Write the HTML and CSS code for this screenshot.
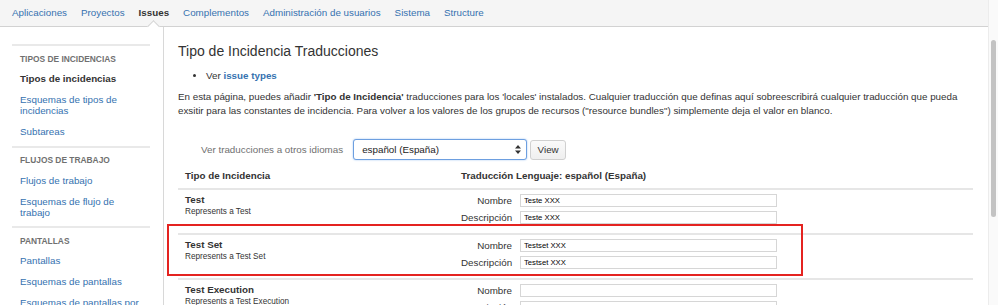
FILE: index.html
```html
<!DOCTYPE html>
<html lang="es">
<head>
  <meta charset="UTF-8" />
  <title>Tipo de Incidencia Traducciones</title>
  <link rel="stylesheet" href="styles.css">
</head>
<body>
  <div class="page">
    <div class="top-nav">
      <a class="nav-item" href="#">Aplicaciones</a>
      <a class="nav-item" href="#">Proyectos</a>
      <a class="nav-item active" href="#">Issues</a>
      <a class="nav-item" href="#">Complementos</a>
      <a class="nav-item" href="#">Administración de usuarios</a>
      <a class="nav-item" href="#">Sistema</a>
      <a class="nav-item" href="#">Structure</a>
    </div>

    <div class="layout">
      <div class="sidebar">
        <div class="side-group">
          <div class="side-heading">Tipos de incidencias</div>
          <a class="side-item current" href="#">Tipos de incidencias</a>
          <a class="side-item" href="#">Esquemas de tipos de incidencias</a>
          <a class="side-item" href="#">Subtareas</a>
        </div>
        <div class="side-group">
          <div class="side-heading">Flujos de trabajo</div>
          <a class="side-item" href="#">Flujos de trabajo</a>
          <a class="side-item" href="#">Esquemas de flujo de trabajo</a>
        </div>
        <div class="side-group">
          <div class="side-heading">Pantallas</div>
          <a class="side-item" href="#">Pantallas</a>
          <a class="side-item" href="#">Esquemas de pantallas</a>
          <a class="side-item" href="#">Esquemas de pantallas por tipo de incidencia</a>
        </div>
      </div>

      <div class="content">
        <h1 class="page-title">Tipo de Incidencia Traducciones</h1>
        <ul class="links">
          <li>Ver <a href="#">issue types</a></li>
        </ul>
        <p class="intro">En esta página, puedes añadir <b>'Tipo de Incidencia'</b> traducciones para los 'locales' instalados. Cualquier traducción que definas aquí sobreescribirá cualquier traducción que pueda exsitir para las constantes de incidencia. Para volver a los valores de los grupos de recursos ("resource bundles") simplemente deja el valor en blanco.</p>

        <div class="locale-row">
          <span class="locale-label">Ver traducciones a otros idiomas</span>
          <div class="select-box">
            <span>español (España)</span>
            <svg width="6" height="9" viewBox="0 0 6 9"><path d="M3 0 L6 3.5 H0 Z M3 9 L6 5.5 H0 Z" fill="#333"/></svg>
          </div>
          <button class="view-button">View</button>
        </div>

        <div class="table-wrap">
          <table class="trans-table">
            <colgroup>
              <col class="col-type">
              <col>
            </colgroup>
            <tr>
              <th>Tipo de Incidencia</th>
              <th>Traducción Lenguaje: español (España)</th>
            </tr>
            <tr>
              <td>
                <div class="issue-name">Test</div>
                <div class="issue-desc">Represents a Test</div>
              </td>
              <td>
                <div class="fields">
                  <label>Nombre</label><input type="text" value="Teste XXX">
                  <label>Descripción</label><input type="text" value="Teste XXX">
                </div>
              </td>
            </tr>
            <tr>
              <td>
                <div class="issue-name">Test Set</div>
                <div class="issue-desc">Represents a Test Set</div>
              </td>
              <td>
                <div class="fields">
                  <label>Nombre</label><input type="text" value="Testset XXX">
                  <label>Descripción</label><input type="text" value="Testset XXX">
                </div>
              </td>
            </tr>
            <tr>
              <td>
                <div class="issue-name">Test Execution</div>
                <div class="issue-desc">Represents a Test Execution</div>
              </td>
              <td>
                <div class="fields">
                  <label>Nombre</label><input type="text" value="">
                  <label>Descripción</label><input type="text" value="">
                </div>
              </td>
            </tr>
          </table>
          <div class="highlight"></div>
        </div>
      </div>
    </div>
  </div>

  <div class="scrollbar">
    <div class="scroll-thumb"></div>
  </div>
</body>
</html>
```

FILE: styles.css
```css
html, body {
  height: 100%;
}

body {
  margin: 0;
  display: flex;
  overflow: hidden;
  font-family: "Liberation Sans", Arial, sans-serif;
  font-size: 9.8px;
  line-height: 14px;
  color: #333;
  background: #fff;
}

a {
  color: #3572b0;
  text-decoration: none;
}

.page {
  flex: 1;
  min-width: 0;
}

/* top navigation */
.top-nav {
  display: flex;
  align-items: center;
  gap: 14px;
  height: 26px;
  padding-left: 12px;
  background-color: #f5f5f5;
  border-bottom: 1px solid #d2d2d2;
}

.nav-item {
  position: relative;
  display: flex;
  align-items: center;
  height: 26px;
}

.nav-item.active {
  color: #333;
  font-weight: bold;
}

.nav-item.active::after {
  content: "";
  position: absolute;
  left: 50%;
  bottom: -4.5px;
  width: 8px;
  height: 8px;
  margin-left: -5px;
  background: #fff;
  border-left: 1px solid #d2d2d2;
  border-top: 1px solid #d2d2d2;
  transform: rotate(45deg);
  z-index: 2;
}

.layout {
  display: flex;
}

/* sidebar */
.sidebar {
  width: 164px;
  box-sizing: border-box;
  padding: 17px 13px 0 12px;
  border-right: 1px solid #d8d8d8;
  min-height: 300px;
}

.side-group {
  border-top: 2px solid #e9e9e9;
  padding-bottom: 3.5px;
}

.side-heading {
  padding: 5.5px 8px 0;
  margin-bottom: 2.5px;
  font-size: 8.4px;
  font-weight: bold;
  text-transform: uppercase;
  color: #707070;
}

.side-item {
  display: block;
  padding: 5px 8px;
  line-height: 11px;
}

.side-item.current {
  color: #333;
  font-weight: bold;
}

/* main content */
.content {
  flex: 1;
  padding: 14px 15px 0 14px;
}

.page-title {
  margin: 0;
  font-size: 14px;
  line-height: 20px;
  font-weight: normal;
  color: #333;
}

.links {
  margin: 8px 0 0;
  padding-left: 28px;
}

.links a {
  font-weight: bold;
}

.intro {
  margin: 7px 0 0;
}

.locale-row {
  display: flex;
  align-items: center;
  margin: 21px 0 0 23px;
  height: 21px;
}

.locale-label {
  color: #707070;
  margin-right: 10px;
}

.select-box {
  display: flex;
  align-items: center;
  justify-content: space-between;
  width: 174px;
  height: 21px;
  box-sizing: border-box;
  padding: 0 5px 0 8px;
  border: 1px solid #6d9fe0;
  border-radius: 3px;
  box-shadow: 0 0 2px #9cc0ef;
  background: #fff;
  color: #222;
}

.view-button {
  margin-left: 3px;
  height: 20px;
  width: 36px;
  padding: 0;
  font-family: inherit;
  font-size: 9.8px;
  color: #333;
  background: linear-gradient(#fafafa, #efefef);
  border: 1px solid #d0d0d0;
  border-radius: 3px;
}

/* translations table */
.table-wrap {
  position: relative;
  margin-top: 4px;
}

.trans-table {
  width: 100%;
  border-collapse: collapse;
}

.col-type {
  width: 276px;
}

.trans-table th {
  padding: 5px 7px;
  text-align: left;
  font-weight: bold;
  border-bottom: 2px solid #e6e6e6;
}

.trans-table td {
  vertical-align: top;
  padding: 4px 7px 9px;
  border-bottom: 2px solid #e6e6e6;
}

.issue-name {
  font-weight: bold;
  line-height: 12px;
}

.issue-desc {
  font-size: 8.2px;
  line-height: 12px;
}

.fields {
  display: grid;
  grid-template-columns: 51px 257px;
  column-gap: 8px;
  row-gap: 4px;
}

.fields label {
  text-align: right;
  line-height: 13px;
  white-space: nowrap;
}

.fields input {
  height: 13px;
  box-sizing: border-box;
  margin: 0;
  padding: 0 3px;
  border: 1px solid #d6d6d6;
  font-family: inherit;
  font-size: 7.7px;
  color: #000;
}

/* red box drawn over the Test Set row */
.highlight {
  position: absolute;
  left: -11px;
  top: 60px;
  width: 636px;
  height: 52px;
  box-sizing: border-box;
  border: 2px solid #e42320;
  pointer-events: none;
}

/* fake window scrollbar */
.scrollbar {
  width: 10px;
  box-sizing: border-box;
  border-left: 1px solid #ececec;
  background: #fafafa;
}

.scroll-thumb {
  width: 5px;
  height: 177px;
  margin: 40px 0 0 2px;
  border-radius: 3px;
  background: #c3c3c3;
}
```
